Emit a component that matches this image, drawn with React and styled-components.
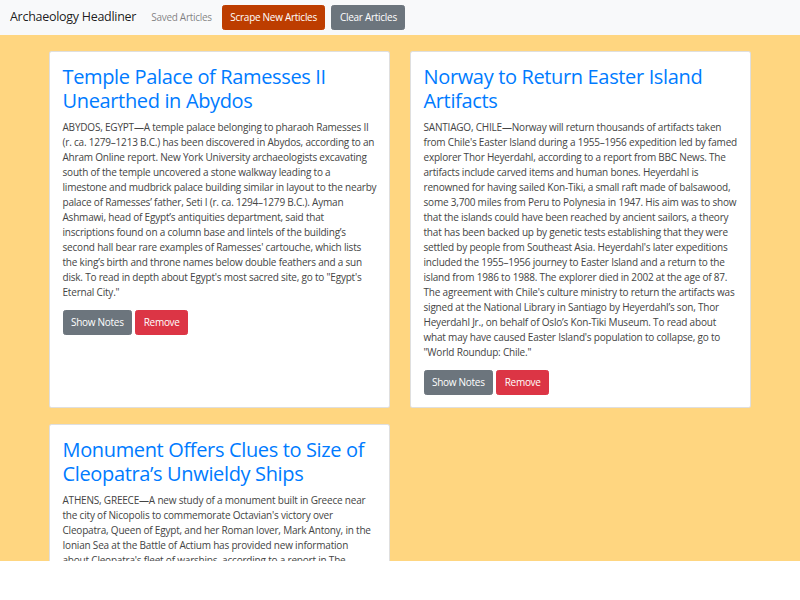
import React from "react";
import styled, { createGlobalStyle } from "styled-components";

const GlobalStyle = createGlobalStyle`
  html {
    font-size: 10px;
  }
  body {
    margin: 0;
    background: #fff;
    font-family: "Open Sans", "Noto Sans", sans-serif;
    font-size: 1rem;
    line-height: 1.5;
    letter-spacing: -0.28px;
    color: #444;
  }
  * {
    box-sizing: border-box;
  }
`;

const Navbar = styled.nav`
  display: flex;
  align-items: center;
  padding: 0.5rem 1rem;
  background-color: #f8f9fa;
`;

const Brand = styled.a`
  margin-right: 1rem;
  padding: 0.3rem 0;
  font-size: 1.25rem;
  line-height: 1.5;
  color: rgba(0, 0, 0, 0.9);
  text-decoration: none;
`;

const NavLink = styled.a`
  padding: 0.5rem;
  color: rgba(0, 0, 0, 0.5);
  text-decoration: none;
`;

const colors = {
  scrape: "#bd3d00",
  secondary: "#6c757d",
  danger: "#dc3545",
};

const Button = styled.button`
  display: inline-block;
  padding: 0.375rem 0.75rem;
  font-family: inherit;
  font-size: 1rem;
  line-height: 1.5;
  letter-spacing: inherit;
  color: #fff;
  background-color: ${(p) => colors[p.$variant]};
  border: 1px solid ${(p) => colors[p.$variant]};
  border-radius: 0.25rem;
  cursor: pointer;
  margin-left: ${(p) => p.$gap || 0};
`;

const Main = styled.main`
  height: 526px;
  overflow: hidden;
  padding-top: 16px;
  background-color: #ffd680;
`;

const Grid = styled.div`
  display: grid;
  grid-template-columns: repeat(2, 341px);
  justify-content: center;
  column-gap: 20px;
  row-gap: 16px;
`;

const Card = styled.div`
  padding: 1.25rem;
  background: #fff;
  border: 1px solid rgba(0, 0, 0, 0.125);
  border-radius: 0.25rem;
`;

const Title = styled.h2`
  margin: 0 0 0.75rem;
  font-size: 2rem;
  font-weight: 400;
  line-height: 1.2;
  letter-spacing: -0.35px;
  color: #007bff;
`;

const Summary = styled.p`
  margin: 0 0 1rem;
  letter-spacing: -0.2px;
`;

const Actions = styled.div`
  display: flex;
  gap: 3px;
`;

const articles = [
  {
    title: "Temple Palace of Ramesses II Unearthed in Abydos",
    summary:
      "ABYDOS, EGYPT—A temple palace belonging to pharaoh Ramesses II (r. ca. 1279–1213 B.C.) has been discovered in Abydos, according to an Ahram Online report. New York University archaeologists excavating south of the temple uncovered a stone walkway leading to a limestone and mudbrick palace building similar in layout to the nearby palace of Ramesses’ father, Seti I (r. ca. 1294–1279 B.C.). Ayman Ashmawi, head of Egypt’s antiquities department, said that inscriptions found on a column base and lintels of the building’s second hall bear rare examples of Ramesses' cartouche, which lists the king’s birth and throne names below double feathers and a sun disk. To read in depth about Egypt's most sacred site, go to \"Egypt's Eternal City.\"",
  },
  {
    title: "Norway to Return Easter Island Artifacts",
    summary:
      "SANTIAGO, CHILE—Norway will return thousands of artifacts taken from Chile's Easter Island during a 1955–1956 expedition led by famed explorer Thor Heyerdahl, according to a report from BBC News. The artifacts include carved items and human bones. Heyerdahl is renowned for having sailed Kon-Tiki, a small raft made of balsawood, some 3,700 miles from Peru to Polynesia in 1947. His aim was to show that the islands could have been reached by ancient sailors, a theory that has been backed up by genetic tests establishing that they were settled by people from Southeast Asia. Heyerdahl's later expeditions included the 1955–1956 journey to Easter Island and a return to the island from 1986 to 1988. The explorer died in 2002 at the age of 87. The agreement with Chile's culture ministry to return the artifacts was signed at the National Library in Santiago by Heyerdahl’s son, Thor Heyerdahl Jr., on behalf of Oslo’s Kon-Tiki Museum. To read about what may have caused Easter Island's population to collapse, go to \"World Roundup: Chile.\"",
  },
  {
    title: "Monument Offers Clues to Size of Cleopatra’s Unwieldy Ships",
    summary:
      "ATHENS, GREECE—A new study of a monument built in Greece near the city of Nicopolis to commemorate Octavian's victory over Cleopatra, Queen of Egypt, and her Roman lover, Mark Antony, in the Ionian Sea at the Battle of Actium has provided new information about Cleopatra's fleet of warships, according to a report in The Guardian. The monument was decorated with bronze rams taken from the captured ships.",
  },
];

function App() {
  return (
    <>
      <GlobalStyle />
      <Navbar>
        <Brand href="#">Archaeology Headliner</Brand>
        <NavLink href="#">Saved Articles</NavLink>
        <Button $variant="scrape" $gap="0.5rem">Scrape New Articles</Button>
        <Button $variant="secondary" $gap="6px">Clear Articles</Button>
      </Navbar>
      <Main>
        <Grid>
          {articles.map((a) => (
            <Card key={a.title}>
              <Title>{a.title}</Title>
              <Summary>{a.summary}</Summary>
              <Actions>
                <Button $variant="secondary">Show Notes</Button>
                <Button $variant="danger">Remove</Button>
              </Actions>
            </Card>
          ))}
        </Grid>
      </Main>
    </>
  );
}

export default App;
